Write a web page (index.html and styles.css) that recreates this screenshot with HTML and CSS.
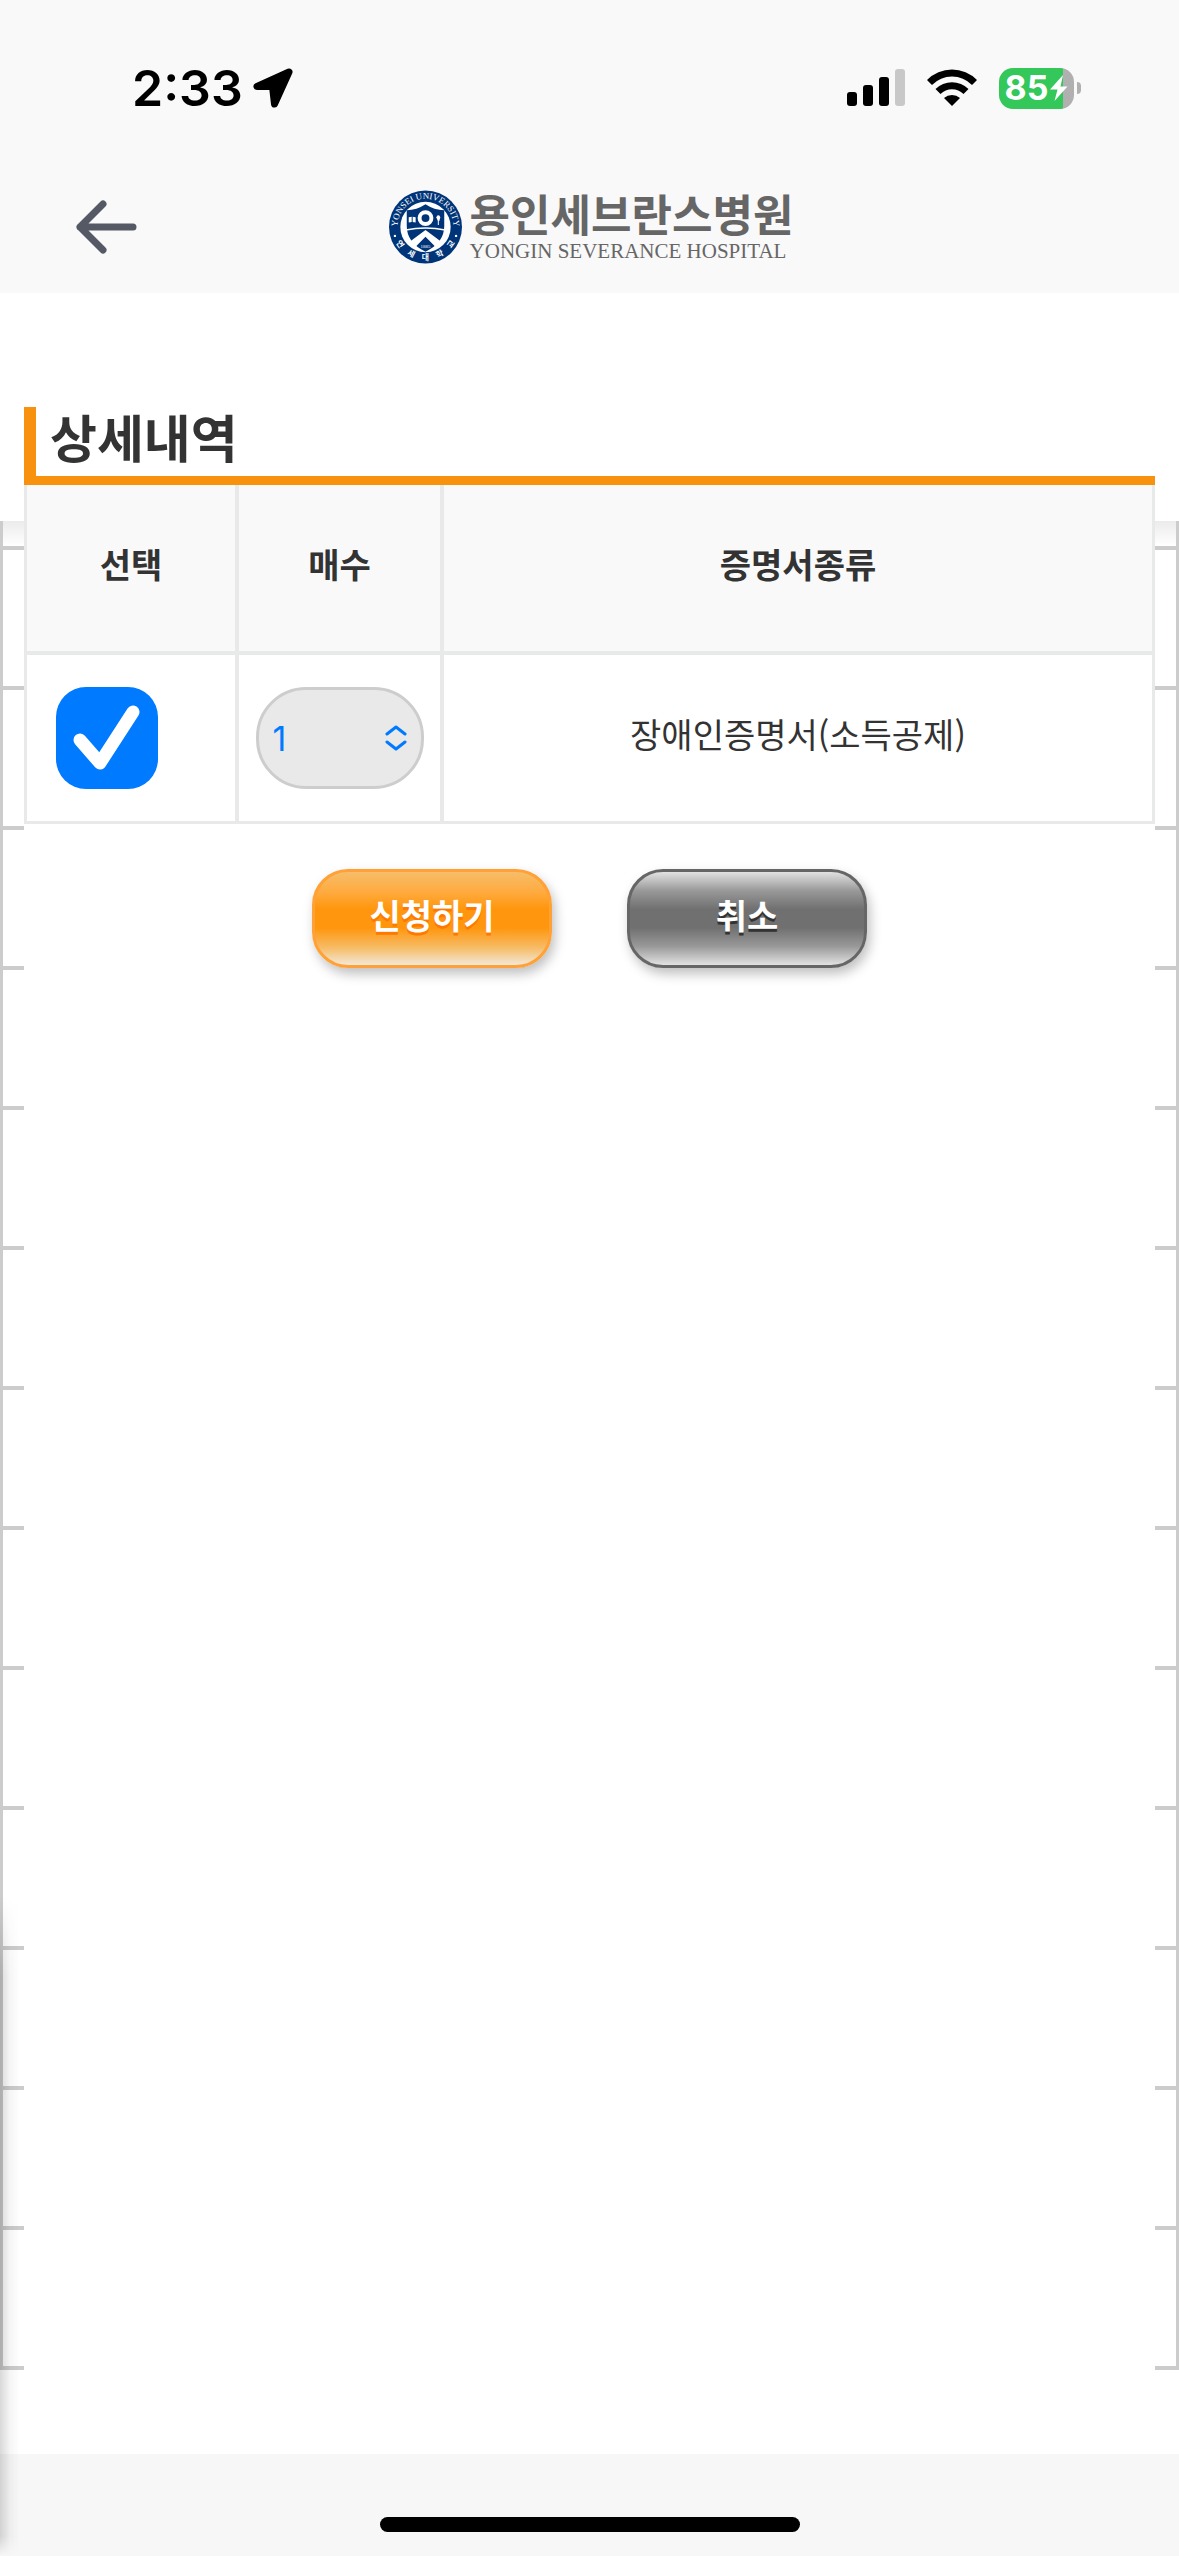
FILE: index.html
```html
<!DOCTYPE html>
<html lang="ko">
<head>
    <meta charset="UTF-8">
    <meta name="viewport" content="width=device-width, initial-scale=1.0">
    <title>용인세브란스병원 - 상세내역</title>
    <link rel="stylesheet" href="styles.css">
</head>
<body>

    <header>
        <div class="status-bar">
            <div class="status-left">
                <span class="time">2:33</span>
                <svg class="icon-location" viewBox="0 0 40 40" width="40" height="40" aria-hidden="true">
                    <path d="M36 4 L4 18.500 H19.500 L21.500 36 Z" fill="#000" stroke="#000" stroke-width="7" stroke-linejoin="round"/>
                </svg>
            </div>
            <div class="status-right">
                <svg viewBox="0 0 58 38" width="58" height="38" aria-hidden="true">
                    <rect x="0" y="23" width="10" height="14" rx="3"/>
                    <rect x="16" y="16" width="10" height="21" rx="3"/>
                    <rect x="32" y="8" width="10" height="29" rx="3"/>
                    <rect x="48" y="0" width="10" height="37" rx="3" fill="#c8c8c8"/>
                </svg>
                <svg viewBox="0 0 50 38" width="50" height="38" aria-hidden="true">
                    <path d="M0 11 A35 35 0 0 1 50 11 L45 16 A28 28 0 0 0 5 16 Z"/>
                    <path d="M8.500 20 A23.500 23.500 0 0 1 41.500 20 L36.500 25 A16.500 16.500 0 0 0 13.500 25 Z"/>
                    <path d="M17 29 A12 12 0 0 1 33 29 L25 37 Z"/>
                </svg>
                <div class="battery">
                    <span class="battery-body">
                        <span class="battery-text">85</span>
                        <svg viewBox="0 0 18 26" width="18" height="26" aria-hidden="true">
                            <path d="M13 0 L0 14.500 H7.500 L4.500 26 L17.500 11.500 H10.500 Z" fill="#fff"/>
                        </svg>
                    </span>
                    <span class="battery-cap"></span>
                </div>
            </div>
        </div>

        <nav>
            <button type="button" class="back-button" aria-label="뒤로">
                <svg viewBox="0 0 64 56" width="64" height="56" aria-hidden="true">
                    <path d="M28 5 L5 28 L28 51 M5 28 H58" fill="none" stroke="#555865" stroke-width="7" stroke-linecap="round" stroke-linejoin="round"/>
                </svg>
            </button>
            <div class="logo">
                <svg viewBox="0 0 74 74" width="73" height="74" aria-hidden="true">
                    <defs>
                        <path id="ring-top" d="M10 46 A28.500 28.500 0 1 1 64 46"/>
                        <path id="ring-bottom" d="M4 46 A34.500 34.500 0 0 0 70 46"/>
                    </defs>
                    <circle cx="37" cy="37" r="37" fill="#003478"/>
                    <circle cx="37" cy="37" r="25.500" fill="#fff"/>
                    <text class="ring-text"><textPath href="#ring-top" startOffset="50%" text-anchor="middle">YONSEI UNIVERSITY</textPath></text>
                    <text class="ring-text-ko"><textPath href="#ring-bottom" startOffset="50%" text-anchor="middle">연&nbsp;&nbsp;&nbsp;&nbsp;세&nbsp;&nbsp;&nbsp;&nbsp;대&nbsp;&nbsp;&nbsp;&nbsp;학&nbsp;&nbsp;&nbsp;&nbsp;교</textPath></text>
                    <circle cx="6" cy="46" r="1.200" fill="#fff"/>
                    <circle cx="68" cy="46" r="1.200" fill="#fff"/>
                    <path d="M37 14 Q46 20 56 20 V36 Q56 53 37 62 Q18 53 18 36 V20 Q28 20 37 14 Z" fill="#003478"/>
                    <path d="M17 40 Q37 36 57 40" fill="none" stroke="#fff" stroke-width="1.500"/>
                    <path d="M21 52 L37 40 L53 52 L47 57 L37 47 L27 57 Z" fill="#fff"/>
                    <circle cx="37" cy="28" r="6" fill="none" stroke="#fff" stroke-width="4"/>
                    <path d="M20 27 L23 26.500 V32 L20 32.500 Z M24 26.500 L27 27 V32.500 L24 32 Z M48 27 H52 L51 31 H50.500 V35 H49.500 V31 Z" fill="#fff"/>
                    <circle cx="50" cy="27" r="1.800" fill="#fff"/>
                    <text class="year" x="37" y="58" text-anchor="middle">1885</text>
                </svg>
                <div class="logo-text">
                    <span class="logo-ko">용인세브란스병원</span>
                    <span class="logo-en">YONGIN SEVERANCE HOSPITAL</span>
                </div>
            </div>
        </nav>
    </header>

    <main>
        <div class="rail rail-left"></div>

        <section>
            <h1>상세내역</h1>
            <form>
                <table>
                    <thead>
                        <tr>
                            <th class="col-check">선택</th>
                            <th class="col-count">매수</th>
                            <th>증명서종류</th>
                        </tr>
                    </thead>
                    <tbody>
                        <tr>
                            <td class="cell-check">
                                <label class="check">
                                    <input type="checkbox" aria-label="장애인증명서(소득공제) 선택" checked>
                                    <svg viewBox="0 0 102 102" width="102" height="102" aria-hidden="true">
                                        <path d="M24 53 L44 76 L77 25" fill="none" stroke="#fff" stroke-width="13" stroke-linecap="round" stroke-linejoin="round"/>
                                    </svg>
                                </label>
                            </td>
                            <td>
                                <div class="count">
                                    <select aria-label="매수">
                                        <option selected>1</option>
                                        <option>2</option>
                                        <option>3</option>
                                    </select>
                                    <svg viewBox="0 0 22 26" width="22" height="26" aria-hidden="true">
                                        <path d="M2 9 L11 2 L20 9 M2 17 L11 24 L20 17" fill="none" stroke="#007aff" stroke-width="3" stroke-linecap="round" stroke-linejoin="round"/>
                                    </svg>
                                </div>
                            </td>
                            <td>장애인증명서(소득공제)</td>
                        </tr>
                    </tbody>
                </table>

                <div class="buttons">
                    <button type="button" class="btn btn-apply">신청하기</button>
                    <button type="button" class="btn btn-cancel">취소</button>
                </div>
            </form>
        </section>

        <div class="rail rail-right"></div>
    </main>

    <footer>
        <div class="home-indicator"></div>
    </footer>

</body>
</html>
```
FILE: styles.css
```css
* {
    box-sizing: border-box;
}

body {
    font-family: "Noto Sans CJK KR", "Noto Sans", sans-serif;
    margin: 0;
    min-height: 100vh;
    display: flex;
    flex-direction: column;
    position: relative;
    background-color: #fff;
    color: #333;
}

/* shadow of the page sliding in from the left */
body::after {
    content: "";
    position: absolute;
    left: 0;
    bottom: 0;
    width: 20px;
    height: 660px;
    background: linear-gradient(to right, rgba(0, 0, 0, 0.15), rgba(0, 0, 0, 0.04) 50%, transparent);
    -webkit-mask-image: linear-gradient(to bottom, transparent, #000 80px, #000 640px, transparent);
    mask-image: linear-gradient(to bottom, transparent, #000 80px, #000 640px, transparent);
    pointer-events: none;
}

header {
    background-color: #f9f9f9;
    padding-bottom: 28px;
}

.status-bar {
    display: flex;
    justify-content: space-between;
    align-items: center;
    padding: 60px 98px 0 132px;
    height: 116px;
}

.status-left,
.status-right,
.battery {
    display: flex;
    align-items: center;
}

.status-left {
    gap: 10px;
}

.status-right {
    gap: 22px;
}

.time {
    font-family: Inter, sans-serif;
    font-size: 50px;
    font-weight: 600;
    line-height: 56px;
    color: #000;
}

.battery {
    gap: 3px;
}

.battery-body {
    display: flex;
    align-items: center;
    justify-content: center;
    gap: 2px;
    width: 75px;
    height: 41px;
    border-radius: 14px;
    background: linear-gradient(to right, #34c759 64px, #b0b0b0 64px);
}

.battery-text {
    font-family: Inter, sans-serif;
    font-size: 34px;
    font-weight: 700;
    line-height: 40px;
    color: #fff;
}

.battery-cap {
    width: 4px;
    height: 12px;
    border-radius: 0 6px 6px 0;
    background-color: #b0b0b0;
}

nav {
    display: grid;
    grid-template-columns: 1fr auto 1fr;
    align-items: center;
    padding: 73px 72px 0 75px;
}

.back-button {
    justify-self: start;
    display: flex;
    padding: 0;
    border: none;
    background: none;
    cursor: pointer;
}

.logo {
    display: flex;
    align-items: center;
    gap: 8px;
}

.ring-text {
    font-family: "Liberation Serif", serif;
    font-size: 9px;
    fill: #fff;
}

.ring-text-ko {
    font-family: "Noto Sans CJK KR", sans-serif;
    font-size: 8px;
    font-weight: 700;
    fill: #fff;
}

.year {
    font-family: "Liberation Serif", serif;
    font-size: 5px;
    fill: #fff;
}

.logo-text {
    display: flex;
    flex-direction: column;
    color: #666;
}

.logo-ko {
    font-size: 44px;
    font-weight: 700;
    line-height: 48px;
}

.logo-en {
    font-family: "Liberation Serif", serif;
    font-size: 21px;
    line-height: 28px;
}

main {
    flex: 1;
    display: grid;
    grid-template-columns: 24px 1fr 24px;
}

/* edges of the list that lies behind the sheet */
.rail {
    margin: 228px 0 84px;
    border: 0 solid #ccc;
    border-bottom-width: 3px;
    background:
        linear-gradient(to bottom, #ebebeb, #fff) 0 0 / 100% 25px no-repeat,
        repeating-linear-gradient(to bottom, transparent 0, transparent 136px, #ccc 136px, #ccc 140px) 0 29px / 100% 1820px no-repeat,
        linear-gradient(#ccc, #ccc) 0 25px / 100% 4px no-repeat;
}

.rail-left {
    border-left-width: 3px;
}

.rail-right {
    border-right-width: 3px;
}

section {
    padding-top: 114px;
}

h1 {
    margin: 0;
    padding: 0 0 10px 14px;
    border-left: 12px solid #f8910e;
    border-bottom: 9px solid #f8910e;
    font-size: 51px;
    font-weight: 700;
    line-height: 59px;
}

table {
    width: 100%;
    table-layout: fixed;
    border-collapse: separate;
    border-spacing: 0;
    border: 3px solid #e8eaea;
    border-top: none;
}

th,
td {
    height: 166px;
    padding: 0 0 8px;
    border-right: 4px solid #e8eaea;
    font-size: 34px;
    line-height: 48px;
    text-align: center;
    vertical-align: middle;
}

th {
    height: 170px;
    border-bottom: 4px solid #e8eaea;
    background-color: #f9f9f9;
    font-weight: 700;
}

th:last-child,
td:last-child {
    border-right: none;
}

td:not(:last-child) {
    padding: 0;
}

.col-check {
    width: 212px;
}

.col-count {
    width: 205px;
}

td.cell-check {
    padding-left: 29px;
}

.check {
    display: block;
    position: relative;
    width: 102px;
    height: 102px;
}

.check input {
    appearance: none;
    display: block;
    width: 100%;
    height: 100%;
    margin: 0;
    border: 3px solid #cdcdcd;
    border-radius: 30px;
    background-color: #fff;
}

.check input:checked {
    border: none;
    background-color: #007aff;
}

.check svg {
    position: absolute;
    top: 0;
    left: 0;
    pointer-events: none;
}

.check input:not(:checked) + svg {
    display: none;
}

.count {
    position: relative;
    width: 168px;
    margin: 0 auto;
}

.count select {
    appearance: none;
    display: block;
    width: 100%;
    height: 102px;
    padding: 0 40px 0 14px;
    border: 3px solid #cdcdcd;
    border-radius: 50px;
    background-color: #e9e9e9;
    color: #007aff;
    font-family: Inter, sans-serif;
    font-size: 34px;
}

.count svg {
    position: absolute;
    top: 38px;
    right: 17px;
    pointer-events: none;
}

.buttons {
    display: flex;
    justify-content: center;
    gap: 75px;
    padding-top: 45px;
}

.btn {
    width: 240px;
    height: 99px;
    padding: 0 0 8px;
    border: 3px solid;
    border-radius: 36px;
    box-shadow: 3px 6px 12px rgba(0, 0, 0, 0.25);
    color: #fff;
    font-family: inherit;
    font-size: 34px;
    font-weight: 700;
    line-height: 48px;
    cursor: pointer;
}

.btn-apply {
    border-color: #ffa136;
    background: linear-gradient(to bottom, #f6bd69 0%, #ffaa3e 22%, #ff960d 40%, #ff960d 60%, #f6bd69 82%, #f3e8d8 100%);
    text-shadow: 0 3px 0 #ff7800;
}

.btn-cancel {
    border-color: #666;
    background: linear-gradient(to bottom, #e2e2e2 0%, #999 20%, #707070 40%, #707070 60%, #999 80%, #e2e2e2 100%);
    text-shadow: 0 3px 0 #333;
}

footer {
    display: flex;
    justify-content: center;
    padding: 63px 0 24px;
    background-color: #f7f7f7;
}

.home-indicator {
    width: 420px;
    height: 15px;
    border-radius: 8px;
    background-color: #000;
}
```
